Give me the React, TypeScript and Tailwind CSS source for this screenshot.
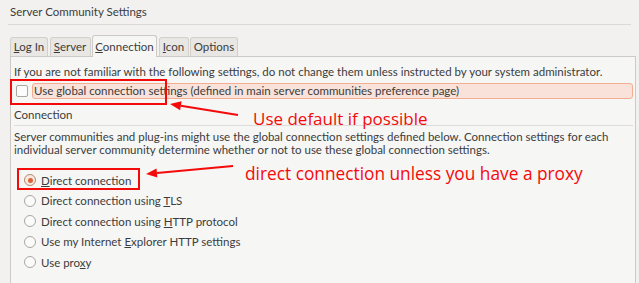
import type { ReactNode } from "react";

const tabs = [
  { key: "L", rest: "og In", width: "w-[38px]" },
  { key: "S", rest: "erver", width: "w-[41px]" },
  { key: "C", rest: "onnection", width: "w-[65px]", active: true },
  { key: "I", rest: "con", width: "w-[30px]" },
  { key: "", rest: "Options", width: "w-[48px]" },
];

function Radio({ checked, children }: { checked?: boolean; children: ReactNode }) {
  return (
    <div className="flex h-[20.5px] items-center pl-[10px]">
      {checked ? (
        <span className="flex h-[12px] w-[12px] items-center justify-center rounded-full border border-[#b28a74] bg-[#fbe9e1]">
          <span className="h-[5px] w-[5px] rounded-full bg-[#d9643a]" />
        </span>
      ) : (
        <span className="h-[12px] w-[12px] rounded-full border border-[#aaa6a1] bg-[#fbfbfb]" />
      )}
      <span className="ml-[5px]">{children}</span>
    </div>
  );
}

function Arrow({ x1, y1, x2, y2 }: { x1: number; y1: number; x2: number; y2: number }) {
  const ang = Math.atan2(y2 - y1, x2 - x1);
  const len = 11;
  const half = 4.5;
  const bx = x2 - Math.cos(ang) * len;
  const by = y2 - Math.sin(ang) * len;
  const px = -Math.sin(ang) * half;
  const py = Math.cos(ang) * half;
  return (
    <>
      <line x1={x1} y1={y1} x2={bx} y2={by} stroke="#f50a0a" strokeWidth="2" />
      <polygon points={`${x2},${y2} ${bx + px},${by + py} ${bx - px},${by - py}`} fill="#f50a0a" />
    </>
  );
}

export default function App() {
  return (
    <div className="relative h-[283px] w-[639px] overflow-hidden bg-[#f2f1f0] font-['Lato',sans-serif] text-[11.5px] text-[#3c3c3c]">
      <div className="h-[24px] pl-[10px] leading-[24px]">Server Community Settings</div>
      <div className="mx-[8px] border-t border-[#dcdad6]" />

      {/* tabs */}
      <div className="mt-[10px] flex h-[21px] items-end gap-[1.5px] pl-[10px]">
        {tabs.map((t) => (
          <div
            key={t.rest}
            className={
              t.active
                ? `relative z-10 -mb-px flex h-[22px] ${t.width} items-center justify-center rounded-t-[3px] border border-b-0 border-[#cdcac5] bg-[#f6f6f5]`
                : `flex h-[19px] ${t.width} items-center justify-center rounded-t-[3px] border border-b-0 border-[#d3d0cb] bg-[#e9e7e4]`
            }
          >
            <span>
              {t.key && <span className="underline decoration-1">{t.key}</span>}
              {t.rest}
            </span>
          </div>
        ))}
      </div>

      {/* panel */}
      <div className="ml-[10px] mr-[3px] h-[240px] border border-[#cdcac5] bg-[#f6f6f5] pl-[3px] pr-[2px]">
        <div className="mt-[7px] h-[16px] leading-[16px]">
          If you are not familiar with the following settings, do not change them unless instructed by your system administrator.
        </div>
        <div className="mt-[3px] flex h-[16px] items-center">
          <span className="ml-[2px] h-[12px] w-[12px] rounded-[2px] border border-[#aaa6a1] bg-[#fbfbfb]" />
          <div className="ml-[4px] flex h-[16px] flex-1 items-center rounded-[3px] border border-[#f4ad92] bg-[#f8e2d9] pl-[1px]">
            Use global connection settings (defined in main server communities preference page)
          </div>
        </div>
        <div className="mt-[8px] h-[16px] leading-[16px]">Connection</div>
        <div className="mt-[2px] border-t border-[#dedcd8]" />
        <div className="mt-[4px] leading-[13px]">
          Server communities and plug-ins might use the global connection settings defined below. Connection settings for each
          <br />
          individual server community determine whether or not to use these global connection settings.
        </div>
        <div className="mt-[14px]">
          <Radio checked>
            <span className="underline decoration-1">D</span>irect connection
          </Radio>
          <Radio>
            Direct connection using <span className="underline decoration-1">T</span>LS
          </Radio>
          <Radio>
            Direct connection using <span className="underline decoration-1">H</span>TTP protocol
          </Radio>
          <Radio>
            Use my Internet <span className="underline decoration-1">E</span>xplorer HTTP settings
          </Radio>
          <Radio>
            Use pro<span className="underline decoration-1">x</span>y
          </Radio>
        </div>
      </div>

      {/* annotations */}
      <div className="absolute left-[10px] top-[79px] h-[26px] w-[157px] border-2 border-[#f50a0a]" />
      <div className="absolute left-[17px] top-[168px] h-[22px] w-[123px] border-2 border-[#f50a0a]" />
      <svg className="absolute left-0 top-0" width="639" height="283">
        <Arrow x1={238} y1={115} x2={170} y2={104} />
        <Arrow x1={233} y1={166} x2={146} y2={174} />
      </svg>
      <div className="absolute left-[253px] top-[108px] font-['Open_Sans',sans-serif] text-[17px] leading-[22px] text-[#f50a0a]">
        Use default if possible
      </div>
      <div className="absolute left-[245px] top-[163px] font-['Open_Sans',sans-serif] text-[17.3px] leading-[22px] text-[#f50a0a]">
        direct connection unless you have a proxy
      </div>
    </div>
  );
}
